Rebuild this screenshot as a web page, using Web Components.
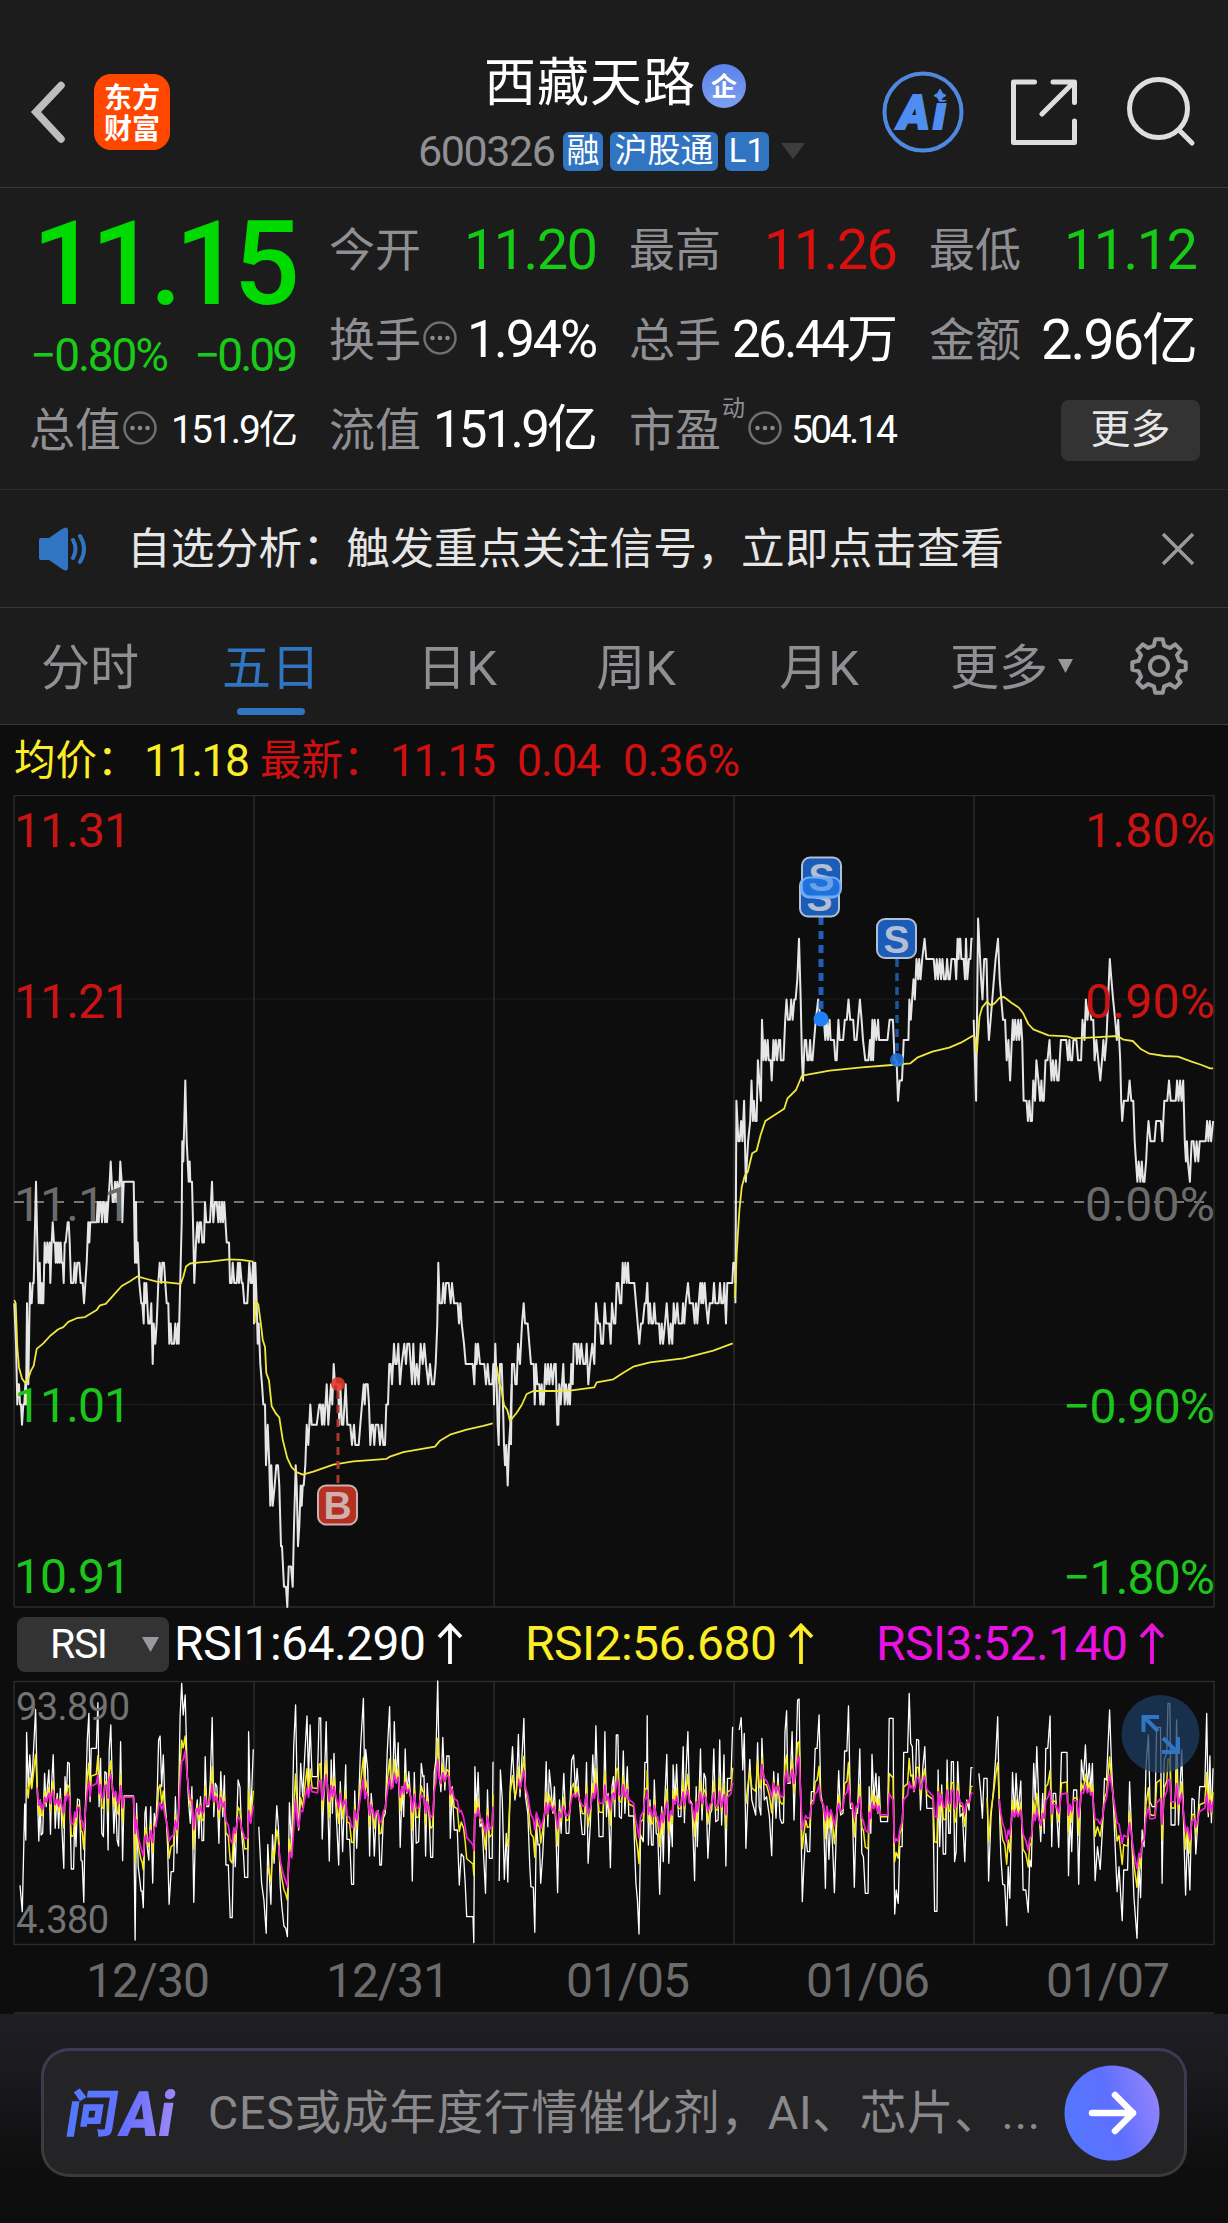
<!DOCTYPE html>
<html lang="zh-CN">
<head>
<meta charset="UTF-8">
<title>西藏天路 600326</title>
<style>
  body {
    margin: 0;
    width: 1228px;
    background: #0d0d0d;
    color: #fff;
    font-family: Roboto, "Noto Sans CJK SC", sans-serif;
  }
</style>
</head>
<body>
<stock-app></stock-app>

<script>
// Text that spreads its letters to fill the width given in "w"
class FitText extends HTMLElement {
  constructor() {
    super();
    this.attachShadow({ mode: "open" });
    this.shadowRoot.innerHTML = `<style>
        :host { display: inline-block; white-space: nowrap; overflow: visible; }
        span { display: inline-block; }
      </style><span><slot></slot></span>`;
  }

  connectedCallback() {
    const w = Number(this.getAttribute("w"));
    const span = this.shadowRoot.querySelector("span");
    const n = [...this.textContent].length;
    span.style.letterSpacing = "0px";
    this.style.width = w + "px";
    const gap = (w - span.getBoundingClientRect().width) / Math.max(1, n - 1);
    span.style.letterSpacing = gap.toFixed(3) + "px";
  }
}

class StockHeader extends HTMLElement {
  constructor() {
    super();
    this.attachShadow({ mode: "open" });
  }

  connectedCallback() {
    this.shadowRoot.innerHTML = `
      <style>
        :host { display: flex; height: 187px; border-bottom: 1px solid #383838; background: #1c1c1c; }
        .left { display: flex; width: 412px; padding: 74px 0 0 26px; box-sizing: border-box; gap: 24px; }
        .logo { width: 76px; height: 76px; border-radius: 17px; background: #ff4700; box-sizing: border-box;
          padding-top: 7px; text-align: center; font: 700 28px/31px "Noto Sans CJK SC", sans-serif; }
        .mid { display: flex; flex-direction: column; width: 408px; padding-top: 53px; box-sizing: border-box; }
        .name { display: flex; align-items: center; height: 62px; padding-left: 72px; gap: 7px; font-size: 52px; line-height: 62px; }
        .qi { display: block; width: 44px; height: 44px; border-radius: 50%; margin-top: 3px; text-align: center;
          background: linear-gradient(#5b82ea, #7da0ee); font: 700 26px/42px "Noto Sans CJK SC", sans-serif; }
        .code { display: flex; align-items: center; height: 40px; margin-top: 16px; padding-left: 6px; font-size: 43px; line-height: 40px; color: #8f8f94; }
        .code > fit-text { margin-right: 7px; }
        i { font-style: normal; box-sizing: border-box; height: 39px; border-radius: 6px; background: #3174c2; color: #fff;
          font-size: 33px; line-height: 38px; text-align: center; margin-right: 7px; overflow: hidden; }
        .right { display: flex; padding-top: 70px; }
      </style>
      <div class="left">
        <svg width="44" height="76"><path d="M35 11.500 10 38 35 65" fill="none" stroke="#bdbdbd" stroke-width="7.500" stroke-linecap="round"/></svg>
        <div class="logo">东方<br>财富</div>
      </div>
      <div class="mid">
        <div class="name"><fit-text w="211">西藏天路</fit-text><span class="qi">企</span></div>
        <div class="code"><fit-text w="138">600326</fit-text>
          <i style="width:40px">融</i><i style="width:108px">沪股通</i><i style="width:44px">L1</i>
          <svg width="26" height="18" style="margin-left:4px"><path d="M1 1h24l-12 16z" fill="#3d3d3d"/></svg>
        </div>
      </div>
      <div class="right">
        <svg width="408" height="90" fill="none">
          <circle cx="103" cy="42" r="38.500" stroke="#5088e0" stroke-width="4"/>
          <text x="78" y="59" fill="#4f8ef0" stroke="#4f8ef0" stroke-width="2" font-family="Roboto" font-size="48" font-weight="900" font-style="italic" textLength="48">Ai</text>
          <path d="M110 15h18v15h-18z" fill="#1c1c1c"/>
          <path d="M120 19q1.500 5 6 6.500q-4.500 1.500-6 6.500q-1.500-5-6-6.500q4.500-1.500 6-6.500z" fill="#4f8ef0" stroke="#4f8ef0"/>
          <g stroke="#dedede" stroke-width="5" stroke-linecap="round" stroke-linejoin="round">
            <path d="M214.500 12H193.500V72.500H254.500V51M233 12h21.500V32.500M252 14 222 44"/>
            <circle cx="338.500" cy="38.500" r="29"/>
            <path d="M359 60 372 73"/>
          </g>
        </svg>
      </div>
    `;
  }
}

class QuoteCell extends HTMLElement {
  constructor() {
    super();
    this.attachShadow({ mode: "open" });
  }

  connectedCallback() {
    const dots = this.hasAttribute("dots");
    const sup = this.getAttribute("sup");
    this.shadowRoot.innerHTML = `
      <style>
        :host { display: flex; align-items: center; height: 90px; line-height: 60px; }
        .label { color: #8f8f94; font-size: 46px; margin-left: -1px; }
        sup { align-self: flex-start; color: #8f8f94; font-size: 23px; line-height: 28px; padding-top: 10px; width: 24px; margin-left: 1px; }
        svg { margin-left: 1px; }
        .value { margin-left: auto; display: flex; }
      </style>
      <span class="label">${this.getAttribute("label")}</span>
      ${sup ? `<sup>${sup}</sup>` : ""}
      ${dots ? `<svg width="36" height="36" style="margin-top:-4px"><circle cx="18" cy="18" r="15.500" fill="none" stroke="#6f6f6f" stroke-width="2.500"/>
        <g fill="#8a8a8a"><circle cx="10.500" cy="18" r="2.300"/><circle cx="18" cy="18" r="2.300"/><circle cx="25.500" cy="18" r="2.300"/></g></svg>` : ""}
      <span class="value"><slot></slot></span>
    `;
  }
}

class QuotePanel extends HTMLElement {
  constructor() {
    super();
    this.attachShadow({ mode: "open" });
  }

  connectedCallback() {
    this.shadowRoot.innerHTML = `
      <style>
        :host { display: grid; grid-template-columns: repeat(4, 268px); grid-template-rows: repeat(3, 90px); column-gap: 32px;
          box-sizing: border-box; height: 302px; padding: 17px 0 0 30px; background: #1c1c1c; border-bottom: 1px solid #2b2b2b; }
        .price { grid-row: span 2; color: #00da00; }
        .big { height: 116px; font-size: 117px; font-weight: 500; line-height: 119px; padding-left: 2px; }
        .chg { display: flex; justify-content: space-between; height: 64px; font-size: 46px; line-height: 68px; color: #19cb19; }
        .up { color: #dc0f0f; }
        .down { color: #16cb16; }
        .more { align-self: center; justify-self: end; width: 139px; height: 61px; border-radius: 8px; background: #333;
          color: #e6e6e6; font-size: 40px; line-height: 59px; text-align: center; margin-right: -2px; }
      </style>
      <div class="price">
        <div class="big"><fit-text w="268">11.15</fit-text></div>
        <div class="chg"><fit-text w="139">−0.80%</fit-text><fit-text w="104">−0.09</fit-text></div>
      </div>
      <quote-cell label="今开"><fit-text class="down" style="font-size:56px" w="134">11.20</fit-text></quote-cell>
      <quote-cell label="最高"><fit-text class="up" style="font-size:56px" w="134">11.26</fit-text></quote-cell>
      <quote-cell label="最低"><fit-text class="down" style="font-size:56px" w="134">11.12</fit-text></quote-cell>
      <quote-cell label="换手" dots><fit-text style="font-size:52px" w="131">1.94%</fit-text></quote-cell>
      <quote-cell label="总手"><fit-text style="font-size:51px" w="166">26.44万</fit-text></quote-cell>
      <quote-cell label="金额"><fit-text style="font-size:56px" w="157">2.96亿</fit-text></quote-cell>
      <quote-cell label="总值" dots><fit-text style="font-size:39px" w="127">151.9亿</fit-text></quote-cell>
      <quote-cell label="流值"><fit-text style="font-size:51px" w="165">151.9亿</fit-text></quote-cell>
      <quote-cell label="市盈" sup="动" dots><fit-text style="font-size:39px" w="107">504.14</fit-text></quote-cell>
      <div class="more">更多</div>
    `;
  }
}

class NoticeBar extends HTMLElement {
  constructor() {
    super();
    this.attachShadow({ mode: "open" });
  }

  connectedCallback() {
    this.shadowRoot.innerHTML = `
      <style>
        :host { display: flex; align-items: center; box-sizing: border-box; height: 118px; padding: 0 33px 0 37px;
          background: #1c1c1c; border-bottom: 1px solid #383838; color: #e6e6e6; font-size: 43.700px; line-height: 60px; }
        fit-text { margin: 0 auto 0 38px; }
      </style>
      <svg width="52" height="44"><path d="M2 13q0-2 2-2h8L25 2q6-4 6 2v36q0 6-6 2L12 33H4q-2 0-2-2z" fill="#3174c2"/>
        <path d="M36 13q5 9 0 18M43 9q8 13 0 26" fill="none" stroke="#3174c2" stroke-width="4" stroke-linecap="round"/></svg>
      <fit-text w="877">${this.getAttribute("text")}</fit-text>
      <svg width="34" height="34"><path d="M2 2 32 32M32 2 2 32" stroke="#9a9a9a" stroke-width="3.500"/></svg>
    `;
  }
}

class PeriodTabs extends HTMLElement {
  constructor() {
    super();
    this.attachShadow({ mode: "open" });
  }

  connectedCallback() {
    const tabs = [["分时", 90], ["五日", 271], ["日K", 457], ["周K", 636], ["月K", 819], ["更多", 999]];
    let used = 0;
    const items = tabs.map(([name, mid]) => {
      const margin = mid - 60 - used;
      used = mid + 60;
      return `<span class="${name === "五日" ? "on" : ""}" style="margin-left:${margin}px">${name}</span>`;
    }).join("");
    // Eight-tooth gear outline
    const gear = [];
    for (let i = 0; i < 8; i++) {
      [[-14, 21], [-8, 27], [8, 27], [14, 21]].forEach(([deg, r]) => {
        const a = (i * 45 + deg - 90) * Math.PI / 180;
        gear.push((29 + r * Math.cos(a)).toFixed(1) + "," + (29 + r * Math.sin(a)).toFixed(1));
      });
    }
    this.shadowRoot.innerHTML = `
      <style>
        :host { display: flex; box-sizing: border-box; height: 117px; background: #1c1c1c; border-bottom: 1px solid #383838;
          color: #8f8f94; font-size: 49px; }
        span { display: flex; flex-direction: column; align-items: center; width: 120px; line-height: 60px; padding-top: 31px; }
        .on { color: #3174c2; }
        .on::after { content: ""; width: 68px; height: 7px; border-radius: 4px; background: #3174c2; margin-top: 9px; }
        svg { flex: none; }
      </style>
      ${items}
      <svg width="16" height="14" style="margin:51px 0 0 -1px"><path d="M0 0h15l-7.500 14z" fill="#98989c"/></svg>
      <svg width="58" height="58" style="margin:29px 0 0 56px" fill="none" stroke="#98989c" stroke-width="4" stroke-linejoin="round">
        <polygon points="${gear.join(" ")}"/><circle cx="29" cy="29" r="9"/></svg>
    `;
  }
}

// "x y x y" string to a list of pairs
function pairs(text) {
  const n = text.trim().split(/\s+/).map(Number);
  const out = [];
  for (let i = 0; i < n.length; i += 2) out.push([n[i], n[i + 1]]);
  return out;
}

function line(points, stroke, width) {
  const d = points.map(([x, y]) => x.toFixed(1) + "," + y.toFixed(1)).join(" ");
  return `<polyline points="${d}" fill="none" stroke="${stroke}" stroke-width="${width}" stroke-linejoin="round"/>`;
}

const DAYS = [14, 254, 494, 734, 974, 1214];

// Price in cents from the previous close, x measured from "from" in steps of "step"
const PRICES = [
  { from: 0, step: 1 / 3, data: `43 -5 48 -7 52 -10 55 -9 57 -9 60 -10 63 -10 66 -11 70 -10 73 -10 76 -9 78 -10 81 -5 85 -9 90 -4 92 -5 95 -5 98 -4 101 -4 108 1 113 -3 116 -5 119 -3 122 -5 125 -4 127 -5 130 -5 134 -2 138 -3 142 -2 145 -3 149 -2 151 -4 155 -2 158 -1 162 -2 165 -2 167 -3 170 -2 173 -3 176 -2 179 -3 182 -2 185 -3 188 -3 191 -4 194 -2 197 -2 203 -1 206 -1 209 -2 213 -4 220 -4 224 -3 227 -4 232 -3 238 -3 242 -4 248 -4 252 -5 260 -3 265 -1 268 -2 271 -1 290 -1 293 0 296 -1 299 0 302 0 306 -1 309 0 312 0 315 -1 319 0 321 -1 325 0 329 1 332 2 338 0 341 0 345 1 349 0 352 1 357 0 361 2 365 1 367 -1 371 1 401 1 405 -3 408 0 410 -3 413 -2 418 -4 424 -5 427 -5 431 -6 433 -4 436 -5 439 -4 445 -6 450 -6 454 -5 458 -8 461 -6 466 -7 470 -6 475 -4 479 -3 484 -4 487 -3 492 -3 496 -4 500 -5 505 -5 508 -7 512 -6 515 -7 522 -7 526 -6 530 -7 534 -6 536 -7 539 -5 542 -3 545 -1 547 3 550 2 556 6 560 3 563 2 566 1 569 2 571 1 576 1 579 -1 583 -4 588 -2 592 -1 596 -2 599 -1 603 -1 607 -2 612 -2 615 0 619 -1 630 -1 636 1 640 -1 645 0 650 0 655 -1 658 0 662 -1 666 0 669 -1 673 0 680 -2 687 -2 690 -4 695 -4 698 -3 703 -4 710 -4 714 -3 717 -4 720 -3 725 -4 728 -4 733 -5 742 -5 748 -3 752 -4 756 -4 759 -3 761 -3 762 -6 766 -3 770 -5 773 -7 776 -6 781 -8 786 -9 790 -10 795 -10 798 -13 803 -11 808 -13 811 -15 814 -13 818 -15 824 -14 829 -13 834 -13 838 -14 843 -17 846 -17 852 -19 858 -19 862 -20 866 -18 873 -18 878 -19 882 -16 887 -13 890 -14 894 -17 898 -16 902 -14 905 -15 908 -14 911 -14 916 -13 920 -11 925 -12 931 -10 935 -11 950 -11 958 -10 962 -10 966 -11 969 -10 973 -11 980 -9 985 -11 989 -10 993 -9 997 -10 1001 -8 1005 -9 1014 -9 1018 -11 1021 -9 1026 -11 1030 -11 1037 -9 1042 -11 1051 -11 1056 -12 1062 -11 1066 -12 1076 -12 1081 -11 1086 -10 1091 -9 1094 -10 1097 -9 1103 -9 1107 -10 1111 -12 1115 -11 1119 -11 1123 -12 1127 -11 1135 -11 1140 -12 1145 -11 1150 -12 1155 -12 1159 -10 1164 -10 1168 -8 1172 -8 1176 -9 1182 -7 1186 -8 1190 -8 1195 -7 1200 -9 1205 -8 1213 -7 1218 -8 1222 -7 1228 -7 1232 -8 1236 -9 1240 -7 1245 -9 1250 -8 1256 -9 1262 -7 1268 -8 1273 -7 1278 -8 1285 -9 1290 -8 1296 -9 1302 -9 1307 -8 1312 -6 1315 -3 1319 -5 1326 -5 1330 -4 1334 -5 1338 -4 1346 -4 1352 -5 1356 -4 1362 -5 1373 -5 1377 -6 1381 -5 1385 -6 1392 -7 1397 -8 1418 -8 1423 -9 1427 -7 1430 -8 1434 -7 1440 -8 1453 -8 1458 -9 1463 -8 1468 -9 1477 -9 1480 -8 1482 -10 1486 -7 1490 -9 1493 -11 1496 -12 1500 -8 1505 -8 1509 -10 1512 -12 1515 -13 1519 -12 1523 -14 1527 -12 1531 -11 1535 -9` },
  { from: 500, step: 1 / 3, data: `33 -12 36 -8 42 -8 46 -9 50 -9 54 -7 60 -8 66 -6 71 -5 75 -6 83 -6 88 -7 93 -8 101 -8 104 -10 108 -8 112 -9 118 -9 121 -10 125 -9 128 -10 131 -10 136 -8 140 -9 144 -8 148 -9 153 -8 158 -9 163 -8 167 -8 172 -11 175 -11 178 -9 182 -10 186 -9 190 -8 194 -10 198 -9 203 -10 207 -9 210 -10 214 -8 218 -9 221 -7 228 -7 231 -8 235 -7 240 -8 244 -7 250 -8 256 -8 260 -7 265 -9 270 -8 277 -7 283 -8 288 -5 294 -6 300 -6 304 -7 309 -7 314 -5 318 -6 328 -6 332 -7 336 -5 342 -6 346 -6 350 -4 355 -4 360 -5 364 -5 368 -3 372 -4 376 -3 380 -4 384 -3 387 -4 403 -4 408 -5 413 -6 418 -7 423 -6 428 -6 434 -5 438 -5 442 -4 446 -6 450 -5 454 -6 459 -6 463 -5 467 -6 477 -6 481 -7 485 -6 489 -7 495 -6 500 -5 504 -6 508 -7 512 -6 517 -7 521 -5 526 -6 532 -5 536 -6 546 -6 549 -5 553 -6 557 -5 564 -4 569 -5 579 -5 584 -6 588 -5 592 -6 596 -5 601 -4 604 -5 607 -4 610 -5 614 -4 618 -5 624 -6 629 -5 638 -5 642 -4 646 -5 656 -5 660 -4 664 -5 669 -5 673 -4 678 -6 682 -4 697 -4 700 -3 705 -3 706 -4` },
  { from: 700, step: 1 / 2.97, data: `105 -5 108 5 114 3 118 3 122 4 126 3 131 5 136 1 143 3 149 4 153 6 157 4 160 5 164 4 168 4 172 7 176 6 181 5 184 9 189 7 193 8 196 7 201 8 204 7 210 7 213 6 218 8 221 7 225 8 229 7 234 8 238 8 240 7 248 7 253 9 257 10 261 9 267 9 271 10 275 9 280 10 284 10 289 11 294 13 299 10 303 7 306 6 311 8 315 8 319 7 323 7 327 8 330 7 334 7 339 8 344 9 351 10 358 9 368 9 372 8 376 9 380 8 385 9 388 8 398 8 402 7 406 7 411 9 415 8 425 8 430 9 436 9 441 10 446 9 455 9 459 8 465 8 470 9 475 10 480 9 484 8 491 7 500 7 505 8 508 7 512 9 514 7 519 9 524 8 529 9 532 8 557 8 563 9 573 9 578 7 584 7 588 5 593 6 600 6 605 8 619 8 622 10 626 9 630 10 634 11 638 10 643 12 648 11 651 12 655 11 660 12 667 13 672 12 694 12 699 11 703 12 707 11 712 12 716 11 720 12 725 11 730 11 734 12 738 11 742 11 747 12 757 12 761 11 765 13 768 12 771 13 773 13 776 12 783 12 787 11 790 13 794 11 799 12 803 12 806 13 810 13` },
  { from: 700, step: 1 / 2.97, data: `813 9 820 5 826 14 832 12 835 11 839 10 844 12 851 12 855 9 858 8 863 9 868 10 873 11 878 12 885 13 890 11 895 10 900 9 906 9 911 7 916 8 921 6 926 8 929 9 932 8 936 9 940 8 945 9 948 8 953 9 957 8 961 5 970 5 974 4 978 5 982 4 986 4 990 6 995 5 999 7 1005 6 1010 5 1014 6 1017 5 1021 5 1026 7 1032 7 1038 8 1044 6 1048 7 1052 6 1057 7 1061 6 1065 6 1072 8 1088 8 1093 7 1097 8 1100 7 1105 7 1109 8 1118 8 1123 7 1132 7 1136 9 1142 8 1146 10 1151 9 1156 10 1162 9 1168 9 1172 7 1177 8 1183 7 1189 6 1194 7 1198 8 1202 7 1207 8 1212 10 1217 12 1222 11 1227 10 1233 9 1238 8 1242 9 1248 7 1251 5 1254 4 1259 5 1271 5 1276 6 1281 5 1287 5 1291 3 1295 2 1299 1 1303 2 1308 1 1312 2 1316 1 1320 1 1325 2 1328 3 1332 4 1338 3 1350 3 1355 4 1369 4 1373 3 1379 5 1388 5 1393 6 1398 5 1413 5 1417 6 1421 5 1426 6 1430 5 1435 6 1440 3 1443 2 1446 3 1449 2 1455 1 1460 3 1466 3 1471 2 1475 3 1480 2 1484 3 1502 3 1506 4 1510 3 1514 4 1518 3 1524 4` }
];

// Average price, one entry per day: scale and origin of both axes, then the points
const AVERAGES = [
  { x0: 0, sx: 3, y0: 245, sy: 2.703, data: `43 703 47 712 52 830 57 885 66 915 76 928 85 915 92 895 101 880 110 835 130 820 150 800 175 782 190 776 205 762 230 752 255 749 290 730 300 717 317 713 340 690 365 665 390 652 412 639 440 646 470 653 500 655 542 659 550 640 558 612 570 604 600 601 630 599 685 593 725 594 760 599` },
  { x0: 0, sx: 3, y0: 245, sy: 2.703, data: `764 765 767 705 775 715 783 770 788 810 795 830 799 900 807 920 815 990 828 1010 838 1020 848 1080 862 1130 875 1155 890 1168 908 1175 940 1167 1000 1148 1060 1139 1160 1132 1170 1126 1210 1114 1305 1099 1320 1083 1350 1067 1400 1053 1450 1043 1478 1036` },
  { x0: 500, sx: 3, y0: 245, sy: 3, data: `-13 985 -10 980 -7 1000 -2 1030 4 1045 12 1095 22 1110 30 1143 50 1118 65 1095 80 1062 100 1053 170 1053 215 1051 283 1042 290 1027 340 1018 370 998 400 980 450 967 550 955 640 932 698 910` },
  { x0: 700, sx: 2.97, y0: 25, sy: 3, data: `104 1434 109 1300 112 1250 117 1170 124 1100 133 1067 142 1055 155 1000 168 992 180 945 194 903 250 866 260 835 285 810 303 767 340 760 385 752 480 742 570 735 625 730 645 713 690 695 740 683 775 668 813 646` },
  { x0: 700, sx: 2.97, y0: 25, sy: 3, data: `816 650 822 700 830 590 838 562 852 545 865 557 875 550 890 533 903 531 925 548 947 563 960 580 975 612 990 628 1035 646 1090 649 1110 655 1170 652 1240 648 1258 659 1285 663 1310 688 1335 701 1380 708 1420 710 1460 725 1490 735 1515 745 1524 745` }
];

class PriceChart extends HTMLElement {
  constructor() {
    super();
    this.attachShadow({ mode: "open" });
  }

  label(text, y, color, right) {
    const w = right ? (text.length > 5 ? 152 : 130) : 117;
    const x = right ? 1215 - w : 14;
    return `<text x="${x}" y="${y + 17}" fill="${color}" font-size="48" textLength="${w}">${text}</text>`;
  }

  badge(x, y, letter, fill, edge) {
    return `<rect x="${x - 19.5}" y="${y - 19.5}" width="39" height="39" rx="8" fill="${fill}" stroke="${edge}" stroke-width="2"/>
      <text x="${x}" y="${y + 14}" text-anchor="middle" font-family="Liberation Sans" font-weight="700" font-size="39" fill="${edge}">${letter}</text>`;
  }

  connectedCallback() {
    const y = (k) => 407 - k * 20.25;
    const prices = PRICES.map((p) => line(pairs(p.data).map(([x, k]) => [p.from + x * p.step, y(k)]), "#e6e6e6", 2)).join("");
    const avgs = AVERAGES.map((a) => line(pairs(a.data).map(([x, v]) => [a.x0 + x / a.sx, a.y0 + v / a.sy]), "#efe63e", 1.8)).join("");
    const blue = "#1a5cb8", pale = "#b2bfd2";
    this.shadowRoot.innerHTML = `
      <style>
        :host { display: block; height: 883px; }
        .info { display: flex; height: 70px; box-sizing: border-box; padding: 6px 0 0 14px; font-size: 44.500px; line-height: 60px; color: #d01010; white-space: nowrap; }
        .info b { font-weight: 400; font-size: 41.500px; width: 130px; }
        .avg { display: flex; color: #fbee28; width: 246px; }
        svg { display: block; font-family: Roboto, sans-serif; }
      </style>
      <div class="info">
        <span class="avg"><b>均价：</b><fit-text w="106">11.18</fit-text></span><b>最新：</b><fit-text w="106">11.15</fit-text>
        <fit-text style="margin-left:21px" w="84">0.04</fit-text><fit-text style="margin-left:22px" w="117">0.36%</fit-text>
      </div>
      <svg width="1228" height="813">
        <path d="M14 .5H1214M14 812H1214${DAYS.map((x) => `M${x} 0V812`).join("")}" stroke="#2b2b2b" stroke-width="1.500"/>
        <path d="M14 204H1214M14 609.500H1214" stroke="#373737" stroke-dasharray="1 1.500"/>
        <path d="M14 407H1214" stroke="#999" stroke-width="1.700" stroke-dasharray="10 10"/>
        ${prices}${avgs}
        ${this.label("11.31", 35, "#c91414")}${this.label("11.21", 206, "#c91414")}${this.label("11.11", 409, "#6b6b6b")}
        ${this.label("11.01", 610, "#1cc41c")}${this.label("10.91", 781, "#1cc41c")}
        ${this.label("1.80%", 35, "#c91414", true)}${this.label("0.90%", 206, "#c91414", true)}${this.label("0.00%", 409, "#6b6b6b", true)}
        ${this.label("−0.90%", 611, "#1cc41c", true)}${this.label("−1.80%", 782, "#1cc41c", true)}
        <path d="M338 596V690" stroke="#a93a2d" stroke-width="3" stroke-dasharray="8 6"/>
        <circle cx="338" cy="589" r="7" fill="#e0392a" opacity=".9"/>
        ${this.badge(337.5, 710, "B", "#b53022", "#cdb1ae")}
        <path d="M821 122V218" stroke="#1f5fb6" stroke-width="5" stroke-dasharray="8 6"/>
        <circle cx="821" cy="224" r="7.500" fill="#2080fa"/>
        <path d="M897 164V258" stroke="#1d55a0" stroke-width="3.500" stroke-dasharray="8 6"/>
        <circle cx="897" cy="265" r="7" fill="#2272dc" opacity=".9"/>
        ${this.badge(819.5, 102, "S", blue, pale)}
        ${this.badge(821.5, 82, "S", blue, pale)}
        <rect x="801" y="82.500" width="39.500" height="20" rx="8" fill="#2385ff" fill-opacity=".5" stroke="#76adf8" stroke-width="2"/>
        ${this.badge(896.5, 143.5, "S", blue, pale)}
      </svg>
    `;
  }
}

// Fast oscillator: one string per day
const RSI_FAST = [
  `51 856 57 935 63 612 66 720 68 397 72 560 76 465 81 560 84 490 91 328 95 560 99 723 103 600 105 705 109 700 114 520 118 620 121 560 125 510 129 703 132 550 136 464 141 685 146 580 150 685 154 565 158 685 163 805 166 530 169 600 173 487 177 490 180 700 182 807 188 807 191 640 194 740 198 597 203 600 207 780 210 784 214 907 218 620 223 420 227 340 230 605 233 445 246 445 250 308 253 620 257 475 260 700 264 710 268 515 272 520 276 750 279 450 283 375 287 560 291 700 295 580 299 720 303 738 308 425 313 782 317 588 341 588 345 1020 349 610 353 800 356 830 360 873 363 873 366 923 370 640 373 620 376 740 380 780 385 620 390 849 394 640 398 680 402 560 405 420 409 408 413 560 417 465 421 600 425 660 428 740 432 913 437 815 443 815 448 590 452 760 456 620 460 350 464 250 468 345 473 285 478 520 482 610 486 670 490 560 495 907 500 640 504 600 508 715 512 590 516 722 520 722 524 470 528 620 533 620 537 540 542 352 546 650 550 550 554 560 559 730 564 515 569 650 573 527 577 795 583 795 588 953 593 953 597 700 601 800 604 690 608 540 613 562 617 700 622 765 625 832 633 832 635 395 640 660 647 448`,
  `661 680 668 850 674 900 680 1000 684 733 688 830 692 913 696 704 700 790 707 617 711 680 716 860 720 920 725 978 730 985 734 1010 739 608 745 745 750 440 755 315 760 640 763 690 768 490 773 590 778 475 784 348 788 540 792 375 797 530 811 530 815 354 819 354 823 717 828 560 833 365 837 600 841 783 846 480 849 640 853 460 857 600 865 795 869 545 875 755 883 495 886 718 893 718 898 853 903 853 906 573 911 745 916 600 921 440 928 295 932 590 934 448 939 510 944 768 948 580 952 640 956 768 961 640 966 632 970 795 974 795 979 655 984 640 989 460 995 320 999 560 1003 560 1007 365 1012 540 1017 428 1022 742 1027 560 1031 650 1035 447 1039 580 1044 515 1049 600 1053 843 1058 517 1063 730 1069 725 1076 490 1080 530 1083 527 1087 768 1091 550 1096 650 1100 772 1105 772 1109 520 1113 480 1118 243 1122 520 1126 575 1131 412 1136 570 1141 468 1147 468 1150 715 1155 560 1160 690 1168 690 1173 855 1178 762 1184 770 1188 850 1192 950 1208 950 1210 1028 1213 500 1217 640 1221 517 1226 680 1231 670 1240 880 1245 570 1250 775 1257 775 1259 485`,
  `1275 843 1278 510 1283 600 1288 838 1293 700 1297 846 1303 560 1309 440 1315 600 1319 570 1324 403 1328 590 1338 355 1342 590 1348 640 1353 800 1356 860 1362 862 1366 997 1370 670 1374 735 1378 733 1381 850 1386 765 1391 640 1395 485 1399 680 1403 510 1407 560 1412 640 1416 560 1420 700 1424 878 1429 600 1433 700 1440 520 1446 700 1453 700 1460 480 1465 465 1470 580 1474 505 1479 590 1483 650 1487 703 1493 704 1498 487 1502 790 1508 670 1514 465 1518 580 1522 377 1527 600 1530 710 1540 710 1545 395 1549 650 1553 580 1559 803 1563 560 1567 530 1570 650 1574 405 1578 405 1582 650 1587 655 1592 453 1596 640 1602 500 1606 648 1618 648 1624 850 1628 900 1632 1002 1636 705 1643 725 1647 487 1652 487 1653 347 1656 735 1660 600 1664 735 1668 735 1671 540 1676 700 1680 705 1685 883 1690 620 1694 785 1698 600 1703 463 1708 790 1713 650 1717 740 1719 495 1724 600 1728 493 1733 650 1739 650 1745 440 1748 668 1752 520 1757 395 1761 600 1767 610 1774 842 1778 560 1781 740 1785 600 1789 447 1793 660 1798 520 1802 535 1808 775 1814 640 1818 630 1823 447 1828 665 1834 660 1838 420 1843 675 1849 465 1854 798 1858 535 1867 535 1871 380`,
  `1888 390 1893 353 1897 510 1901 400 1905 745 1910 600 1915 478 1920 600 1930 645 1935 428 1939 620 1943 645 1946 415 1952 600 1958 590 1965 650 1971 767 1976 515 1982 655 1987 520 1992 655 1997 670 2001 668 2005 395 2009 332 2012 550 2018 550 2023 395 2028 660 2032 520 2037 300 2041 297 2045 620 2049 905 2053 800 2058 700 2062 755 2068 755 2072 575 2078 575 2082 445 2087 445 2092 345 2096 580 2103 625 2108 865 2112 620 2117 778 2122 640 2127 752 2131 878 2136 700 2142 512 2147 645 2153 640 2157 453 2163 453 2167 318 2172 625 2177 625 2182 862 2187 640 2190 640 2196 447 2201 760 2205 770 2210 880 2217 880 2220 560 2224 700 2227 463 2232 600 2237 520 2242 640 2245 530 2249 665 2267 665 2271 355 2281 355 2283 750 2285 942 2289 870 2294 910 2298 740 2304 740 2308 457 2318 457 2322 280 2326 430 2330 440 2334 575 2338 540 2341 418 2346 420 2351 630 2357 500 2362 440 2367 625 2383 625 2387 934 2393 934 2396 510 2400 740 2405 555 2409 762 2415 762 2419 480 2423 700 2427 700 2430 485 2435 485 2438 785 2442 755 2446 485 2452 650 2458 640 2464 785 2469 600 2475 630 2480 503 2484 503`,
  `2500 520 2505 580 2509 655 2513 535 2521 535 2525 843 2531 650 2538 560 2543 470 2548 350 2552 600 2556 765 2561 853 2566 855 2571 977 2575 800 2579 895 2586 517 2591 640 2595 520 2600 640 2607 543 2613 870 2620 870 2626 937 2630 780 2634 800 2640 490 2644 600 2648 440 2653 610 2658 725 2663 580 2667 700 2671 445 2676 445 2682 348 2686 740 2690 580 2696 580 2704 742 2711 457 2725 457 2729 827 2733 640 2737 755 2742 570 2750 570 2755 853 2762 480 2767 540 2772 435 2777 560 2782 490 2786 570 2790 490 2797 842 2803 740 2810 808 2816 680 2821 535 2826 540 2834 330 2839 500 2844 620 2853 875 2858 800 2866 962 2870 810 2880 810 2885 545 2890 700 2896 890 2904 1015 2909 800 2913 893 2917 690 2922 740 2927 500 2933 405 2937 605 2943 620 2950 620 2954 382 2964 382 2968 850 2973 480 2980 460 2983 310 2988 310 2991 675 3001 675 3005 360 3010 675 3018 450 3024 720 3028 885 3033 700 3039 870 3044 595 3050 600 3054 762 3058 690 3064 560 3077 560 3082 340 3086 650 3090 468 3094 668 3098 505`
];

// Slow oscillator
const RSI_SLOW = [
  `60 760 75 580 93 550 100 600 110 612 130 590 150 605 175 600 182 645 200 625 217 645 225 590 245 575 262 570 283 555 300 580 317 592 341 592 350 680 365 735 390 700 405 660 415 640 435 690 455 670 465 520 473 490 482 560 495 640 510 625 530 612 545 595 570 615 583 650 592 680 610 675 630 695 647 655`,
  `661 800 680 860 700 760 708 735 720 780 735 830 740 780 748 780 755 660 763 680 780 620 797 585 813 590 835 555 850 580 875 590 885 630 900 645 915 640 928 590 945 620 970 640 985 620 998 570 1010 550 1025 560 1045 580 1060 600 1080 605 1103 630 1118 530 1125 545 1143 535 1155 570 1175 590 1192 660 1210 690 1218 645 1235 655 1250 670 1259 650`,
  `1275 740 1290 760 1303 590 1315 580 1338 545 1350 580 1365 620 1380 650 1395 635 1415 630 1425 645 1440 640 1455 630 1470 595 1495 600 1510 615 1525 585 1545 590 1568 590 1578 570 1598 580 1618 600 1632 650 1643 615 1668 630 1686 645 1708 635 1728 610 1753 605 1774 620 1793 600 1813 605 1854 610 1871 585`,
  `1888 440 1902 520 1920 540 1935 520 1946 510 1968 550 1998 575 2013 545 2041 510 2049 640 2068 630 2090 600 2113 620 2133 635 2148 630 2166 600 2183 610 2198 625 2216 660 2233 630 2248 640 2267 640 2276 620 2285 680 2296 685 2308 630 2320 610 2338 560 2363 550 2386 585 2393 590 2418 590 2443 590 2466 610 2484 595`,
  `2500 540 2525 650 2543 560 2558 620 2571 670 2588 655 2608 650 2626 710 2638 680 2658 665 2678 620 2698 620 2718 605 2753 610 2773 580 2788 590 2803 640 2818 645 2835 560 2848 600 2866 680 2886 695 2904 760 2918 735 2930 670 2953 660 2966 640 2983 590 3003 590 3018 610 3036 690 3053 665 3068 645 3098 625`
];

// Linear interpolation of a series at x
function valueAt(points, x) {
  for (let i = 1; i < points.length; i++) {
    const [x1, y1] = points[i - 1];
    const [x2, y2] = points[i];
    if (x <= x2) return y1 + (y2 - y1) * Math.max(0, x - x1) / (x2 - x1);
  }
  return points[points.length - 1][1];
}

class RsiPanel extends HTMLElement {
  constructor() {
    super();
    this.attachShadow({ mode: "open" });
  }

  reading(text, color) {
    return `<div class="rsi" style="color:${color}"><fit-text w="252">${text}</fit-text>
      <svg width="26" height="42"><path d="M13 41V3M2 14 13 2.500 24 14" fill="none" stroke="${color}" stroke-width="3.800"/></svg></div>`;
  }

  connectedCallback() {
    const place = (list) => list.map(([x, y]) => [x / 2.554, y / 3 - 80]);
    let white = "", yellow = "", pink = "";
    RSI_FAST.forEach((text, day) => {
      const fast = pairs(text);
      const slow = pairs(RSI_SLOW[day]);
      const mix = (part, skip) => place(fast.slice(skip).map(([x, y]) => {
        const s = valueAt(slow, x);
        return [x, s + (y - s) * part];
      }));
      white += line(place(fast), "#fff", 1.3);
      yellow += line(mix(0.4, 4), "#f5ea20", 1.5);
      pink += line(mix(0.18, 10), "#ee1fd6", 1.7);
    });
    this.shadowRoot.innerHTML = `
      <style>
        :host { display: block; height: 339px; }
        .bar { display: flex; align-items: center; height: 72px; padding: 0 0 0 17px; line-height: 60px; }
        .pick { display: flex; align-items: center; box-sizing: border-box; width: 152px; height: 55px; border-radius: 8px;
          background: #333; padding: 0 10px 0 33px; justify-content: space-between; font-size: 41px; margin-right: 5px; flex: none; }
        .rsi { display: flex; align-items: center; width: 351px; font-size: 48px; gap: 11px; flex: none; }
        .plot { display: block; font-family: Roboto, sans-serif; }
      </style>
      <div class="bar">
        <div class="pick"><fit-text w="58">RSI</fit-text><svg width="17" height="15"><path d="M0 0h17l-8.500 15z" fill="#9a9a9e"/></svg></div>
        ${this.reading("RSI1:64.290", "#fff")}${this.reading("RSI2:56.680", "#fbee28")}${this.reading("RSI3:52.140", "#ea12e0")}
      </div>
      <svg class="plot" width="1228" height="266">
        <path d="M14 1.500H1214M14 264.500H1214${DAYS.map((x) => `M${x} 1V265`).join("")}" stroke="#2b2b2b" stroke-width="1.500"/>
        ${white}${yellow}${pink}
        <text x="16" y="40" fill="#737373" font-size="38" textLength="114">93.890</text>
        <text x="16" y="253" fill="#737373" font-size="38" textLength="93">4.380</text>
        <circle cx="1160.500" cy="54" r="39" fill="#1c3c60" fill-opacity=".75"/>
        <path d="M1158 51 1144 37M1143.500 52V37H1159M1163 58 1177 72M1178 57V72H1162" fill="none" stroke="#3174c2" stroke-width="4"/>
      </svg>
    `;
  }
}

class DateAxis extends HTMLElement {
  constructor() {
    super();
    this.attachShadow({ mode: "open" });
  }

  connectedCallback() {
    const dates = this.getAttribute("dates").split(" ");
    this.shadowRoot.innerHTML = `
      <style>
        :host { display: grid; grid-template-columns: repeat(5, 240px); box-sizing: border-box; height: 67px; margin: 0 14px;
          border-bottom: 2px solid #262628; color: #6b6b6b; font-size: 48px; line-height: 67px; }
        div { text-align: center; padding-left: 27px; }
      </style>
      ${dates.map((d) => `<div><fit-text w="124">${d}</fit-text></div>`).join("")}
    `;
  }
}

class AskBar extends HTMLElement {
  constructor() {
    super();
    this.attachShadow({ mode: "open" });
  }

  connectedCallback() {
    this.shadowRoot.innerHTML = `
      <style>
        :host { display: block; box-sizing: border-box; height: 209px; padding: 34px 41px 0; background: linear-gradient(#1f1e24, #19191e 30%, #0e0e0e 75%, #0d0d0d); }
        .frame { height: 129px; box-sizing: border-box; padding: 3px; border-radius: 28px; background: linear-gradient(#3b3b57, #3b3a38); }
        .box { display: flex; align-items: center; height: 123px; box-sizing: border-box; border-radius: 25px; background: #242426;
          padding: 0 24px 0 22px; font-size: 46.500px; line-height: 60px; color: #8a8a8c; }
        .mark { margin-right: 30px; flex: none; }
        .go { margin-left: auto; flex: none; }
      </style>
      <div class="frame"><div class="box">
        <svg class="mark" width="112" height="64">
          <defs><linearGradient id="ink" gradientUnits="userSpaceOnUse" x1="0" y1="0" x2="112" y2="0">
            <stop offset="0" stop-color="#5278ff"/><stop offset=".5" stop-color="#6670ff"/><stop offset="1" stop-color="#a58cf5"/></linearGradient></defs>
          <g fill="url(#ink)" font-weight="900" transform="translate(10 0) skewX(-9)">
            <text x="-4" y="51" font-family="Noto Sans CJK SC" font-size="51">问</text>
            <text x="50" y="55" font-family="Roboto" font-size="63" textLength="54" lengthAdjust="spacingAndGlyphs">Ai</text>
          </g>
        </svg>
        <fit-text w="832">${this.getAttribute("hint")}</fit-text>
        <svg class="go" width="96" height="96">
          <defs><linearGradient id="go" x1="0" y1=".6" x2="1" y2=".3"><stop offset="0" stop-color="#5378ff"/><stop offset=".5" stop-color="#5e6fff"/><stop offset="1" stop-color="#9385fb"/></linearGradient></defs>
          <circle cx="48" cy="48" r="47.500" fill="url(#go)"/>
          <path d="M28 48H69M51 30 69 48 51 66" fill="none" stroke="#fff" stroke-width="6.500" stroke-linecap="round" stroke-linejoin="round"/>
        </svg>
      </div></div>
    `;
  }
}

class StockApp extends HTMLElement {
  constructor() {
    super();
    this.attachShadow({ mode: "open" });
  }

  connectedCallback() {
    this.shadowRoot.innerHTML = `
      <style>
        :host { display: flex; flex-direction: column; height: 2223px; overflow: hidden; }
      </style>
      <stock-header></stock-header>
      <quote-panel></quote-panel>
      <notice-bar text="自选分析：触发重点关注信号，立即点击查看"></notice-bar>
      <period-tabs></period-tabs>
      <price-chart></price-chart>
      <rsi-panel></rsi-panel>
      <date-axis dates="12/30 12/31 01/05 01/06 01/07"></date-axis>
      <ask-bar hint="CES或成年度行情催化剂，AI、芯片、..."></ask-bar>
    `;
  }
}

customElements.define("fit-text", FitText);
customElements.define("stock-header", StockHeader);
customElements.define("quote-cell", QuoteCell);
customElements.define("quote-panel", QuotePanel);
customElements.define("notice-bar", NoticeBar);
customElements.define("period-tabs", PeriodTabs);
customElements.define("price-chart", PriceChart);
customElements.define("rsi-panel", RsiPanel);
customElements.define("date-axis", DateAxis);
customElements.define("ask-bar", AskBar);
customElements.define("stock-app", StockApp);
</script>
</body>
</html>
